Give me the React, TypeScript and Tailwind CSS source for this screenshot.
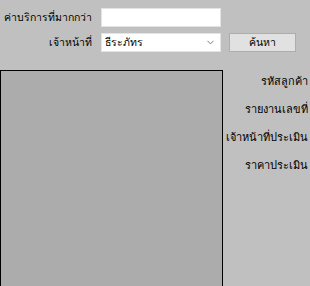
import { ChevronDown } from "lucide-react";

const RIGHT_LABELS = ["รหัสลูกค้า", "รายงานเลขที่", "เจ้าหน้าที่ประเมิน", "ราคาประเมิน"];

export default function App() {
  return (
    <div className="w-[310px] h-[286px] overflow-hidden bg-[#c0c0c0] text-[10.5px] text-black font-['Tahoma','DejaVu_Sans',sans-serif]">
      {/* Filter form */}
      <div className="pt-[8px] flex flex-col gap-[6px]">
        <div className="flex items-center h-[19px]">
          <label className="w-[93px] text-right pr-[1px]">ค่าบริการที่มากกว่า</label>
          <input className="ml-[8px] w-[120px] h-[19px] bg-white border border-[#e3e3e3] outline-none px-1" />
        </div>
        <div className="flex items-center h-[19px]">
          <label className="w-[92px] text-right">เจ้าหน้าที่</label>
          <div className="ml-[9px] w-[120px] h-[19px] bg-white border border-[#e3e3e3] flex items-center justify-between pl-[3px] pr-[4px]">
            <span>ธีระภัทร</span>
            <ChevronDown className="w-[11px] h-[11px] text-[#6d6d6d]" strokeWidth={2} />
          </div>
          <button className="ml-[8px] w-[67px] h-[19px] bg-[#e1e1e1] border border-[#adadad] flex items-center justify-center">
            ค้นหา
          </button>
        </div>
      </div>

      {/* Result area */}
      <div className="mt-[18px] flex">
        <div className="w-[223px] h-[230px] shrink-0 bg-[#acacac] border border-black" />
        <div className="flex-1 min-w-0 flex flex-col items-end pr-[2px] pt-[3px] gap-[11px] text-[11px] font-['Liberation_Serif',serif] whitespace-nowrap">
          {RIGHT_LABELS.map((l) => (
            <span key={l} className="h-[17px] leading-[17px]">
              {l}
            </span>
          ))}
        </div>
      </div>
    </div>
  );
}
